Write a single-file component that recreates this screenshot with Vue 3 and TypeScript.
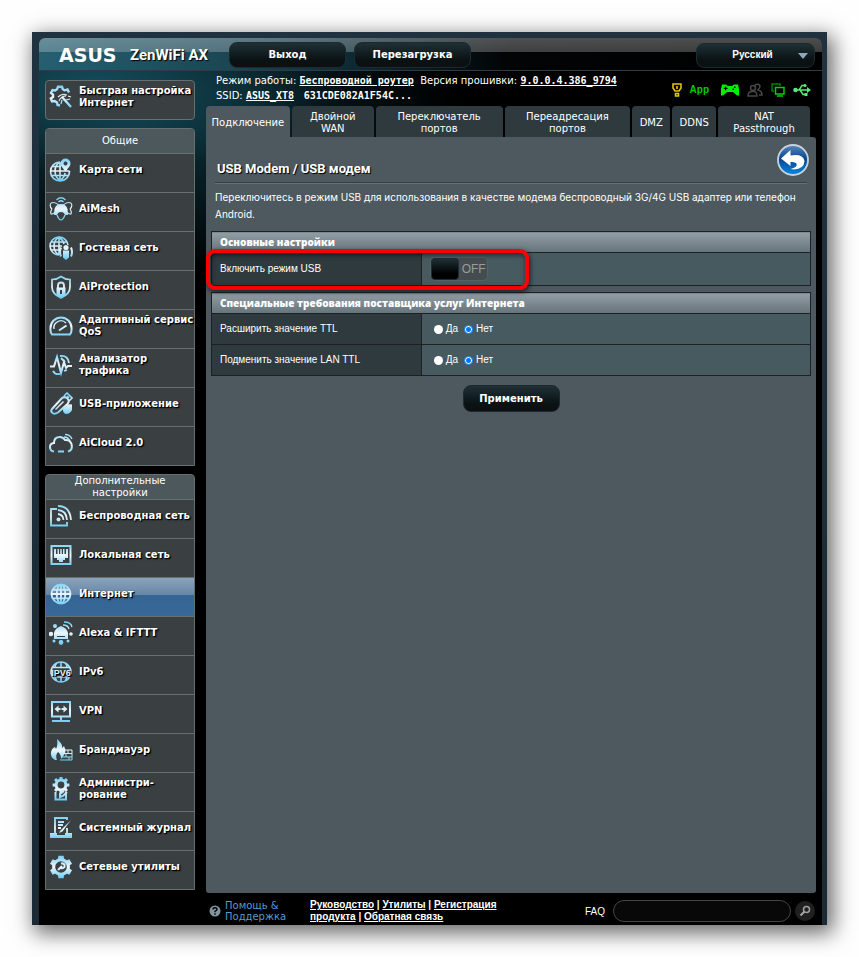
<script setup lang="ts">
import { ref } from 'vue'

interface Shape {
  d: string
  fill?: boolean
  width?: number
}
interface MenuItem {
  label: string
  icon: string
  active?: boolean
}
interface MenuGroup {
  title: string
  items: MenuItem[]
}

function circle(cx: number, cy: number, r: number): string {
  return `M${cx - r} ${cy}a${r} ${r} 0 1 0 ${2 * r} 0a${r} ${r} 0 1 0 ${-2 * r} 0Z`
}

function gear(cx: number, cy: number, outer: number, inner: number, teeth: number): string {
  const points: string[] = []
  const step = (Math.PI * 2) / teeth
  for (let i = 0; i < teeth; i++) {
    const a = i * step - Math.PI / 2
    for (const [offset, r] of [[-0.32, inner], [-0.22, outer], [0.22, outer], [0.32, inner]]) {
      const t = a + offset * step
      points.push(`${(cx + r * Math.cos(t)).toFixed(2)} ${(cy + r * Math.sin(t)).toFixed(2)}`)
    }
  }
  return `M${points.join('L')}Z`
}

function globe(cx: number, cy: number, r: number): string {
  const h = r * 0.45
  const w = r * 0.88
  return (
    circle(cx, cy, r) +
    `M${cx - r} ${cy}h${2 * r}M${cx} ${cy - r}v${2 * r}` +
    `M${cx - w} ${cy - h}h${2 * w}M${cx - w} ${cy + h}h${2 * w}` +
    `M${cx} ${cy - r}a${h} ${r} 0 0 0 0 ${2 * r}a${h} ${r} 0 0 0 0 ${-2 * r}`
  )
}

const icons: Record<string, Shape[]> = {
  wizard: [
    { d: 'M11 20.5L8.500 20L8 17.500L5.500 16L3 16.500L1.800 13.500L4 12L4 9.500L2 8L3.500 5L6 5.500L8 4.200L9 1.800L13 1.800L13.800 4.200L15.500 5.300L18.500 4.500L20 7.500', width: 2.4 },
    { d: 'M13 12L22 22', width: 2.4 },
    { d: 'M9 12q4-4 9-2M10 16q2-5 7-5M19 11l3 1M17 15l4-1M12 19l1-4', width: 1.2 },
  ],
  map: [
    {
      d: 'M11 4A9.500 9.500 0 1 0 20.500 13M1.500 13H20.500M11 4V22.500M3 8.500H12M3 17.500H19M11 4Q6 7 6 13Q6 19 11 22.500Q16 19 16 15',
      width: 1.6,
    },
    { d: 'M16.500 14C14 9.500 11.500 8.500 11.500 5.500a5 5 0 0 1 10 0C21.500 8.500 19 9.500 16.500 14ZM16.500 3.500a2 2 0 1 0 .01 0Z', fill: true },
  ],
  mesh: [
    { d: 'M5 18L5.500 12Q7 7 12 7Q17 7 18.500 12L19 18H16Q15 15 12 15Q9 15 8 18Z', fill: true },
    { d: 'M2 6Q6 4 12 10Q20 18 22 17Q23 15 21 12M22 6Q18 4 12 10Q4 18 2 17Q1 15 3 12M3 12Q0 9 2 6M21 12Q24 9 22 6M8 18Q10 23 12 23Q14 23 16 18', width: 1.2 },
    { d: 'M7.500 3Q12-1.500 16.500 3M9.500 5Q12 2.500 14.500 5', width: 1.2 },
  ],
  guest: [
    { d: 'M19 9A9 9 0 1 0 10 19M1 10H13M10 1V19M2 6H18M2 14H11M10 1Q5 4 5 10Q5 16 10 19M10 1Q14 4 15 8', width: 1.6 },
    { d: circle(17, 11.5, 2.6) + 'M14 14.500h6v7l-3 2.500l-3-2.500Z', fill: true },
    { d: 'M12 11.500q-2 4.500 0 9M22 11.500q2 4.500 0 9', width: 2 },
  ],
  shield: [
    { d: 'M12 1.500Q16 4.500 21 4.500V12Q21 19 12 23Q3 19 3 12V4.500Q8 4.500 12 1.500Z', width: 1.7 },
    { d: 'M9 13V10.500a3 3 0 0 1 6 0V13', width: 1.8 },
    { d: 'M7.500 12.500h9V20l-4.500 3l-4.500-3ZM11 15v4h2v-4Z', fill: true },
  ],
  gauge: [
    { d: 'M3 20.500Q1 18 1.500 14A10.500 10.500 0 0 1 22.500 14Q23 18 21 20.500Z', width: 2 },
    { d: 'M5 15A7 7 0 0 1 17 9', width: 1.4 },
    { d: 'M10 16.500L17.500 11.500', width: 2 },
  ],
  traffic: [
    { d: 'M1 13.500H5L8 4L12 20L15 9L17 15L19 13H23', width: 2 },
    { d: 'M11 3Q19 2 20 10M12 5L16 9M4 18Q6 22 11 21M15 18l3-1', width: 1.8 },
  ],
  usb: [
    { d: 'M3 17L13 6Q16 4 18.500 6.500Q21 9 18.500 12L9 20.500Q5 23 3 20.500Q1.500 19 3 17Z', width: 2 },
    { d: 'M15 4L18 1L23 6L20 9M18 4l2 2', width: 1.6 },
    { d: 'M6 17L14 9L15 10L7 18Z', fill: true },
    { d: 'M14 18Q14 15 17 15Q18 11.500 23 12.500V18Q21 22 17 22Q14 21 14 18Z', fill: true },
  ],
  cloud: [
    { d: 'M5 20.500Q1 20 1 16Q1 12.500 5 12Q5 6.500 10 6Q14 5.500 16 9Q21 8.500 22.500 13Q24 19 19 20.500M9 20.500h6', width: 2 },
    { d: 'M15 6Q19 6 21 10M16 3.500Q21 3.500 23 8', width: 1.3 },
  ],
  wireless: [
    { d: 'M8 5H2V21.500H18V18', width: 1.8 },
    { d: 'M9 2Q21 2 22 16M9 6Q17.500 6.500 18 16M9 10Q14 10.500 14.500 16', width: 1.8 },
    { d: circle(9.5, 15.5, 2), fill: true },
  ],
  lan: [
    { d: 'M2.500 3H21.500V21H2.500Z', width: 2 },
    { d: 'M5 6H7V11H8.500V6H10V11H11.250V6H12.750V11H14V6H15.500V11H17V6H19V15H16V17H14V19H10V17H8V15H5Z', fill: true },
  ],
  internet: [{ d: globe(12, 12, 9.5), width: 1.8 }],
  alexa: [
    { d: 'M5 18V12Q6 7 12 5Q18 7 19 12V18ZM8 16h8v-1H8Z', fill: true },
    { d: circle(2, 13, 2.2) + circle(22, 13, 1.8) + circle(6, 5, 2) + circle(12, 21.5, 2.4) + circle(5, 20, 1.5) + circle(19, 20, 1.5), fill: true },
    { d: 'M14 4Q19 4 20 8M15 1Q22 1 23 6', width: 1.3 },
  ],
  ipv6: [{ d: circle(12, 12, 10) + 'M3 7.500H21M3 17H21M12 2V7M12 17V22M8 3Q6 5 6 7M16 3Q18 5 18 7M6 17Q7 20 8 21M18 17Q17 20 16 21', width: 1.5 }],
  vpn: [
    { d: 'M3 3H21V17.500H3Z', width: 2 },
    { d: 'M12 18V21M3 22H21', width: 2 },
    { d: 'M5.500 10l4-3.500v2.500h2v2h-2v2.500ZM18.500 10l-4-3.500v2.500h-2v2h2v2.500Z', fill: true },
  ],
  firewall: [
    { d: 'M6 22Q1 19 2 14Q3 10 6 9L7 11Q9 7 8 1Q14 6 13 10L15 8Q18 14 15 17L12 21Q12 16 9 14Q6 17 8 22Z', fill: true },
    { d: 'M14 12H23V22H11M15 15.500H23M13 19H23M19 12V15.500M17 15.500V19M20 19V22', width: 1 },
  ],
  admin: [
    { d: gear(12, 8, 8.5, 6.4, 8) + circle(12, 8, 3.4), fill: true },
    { d: 'M6.500 15V22.500H17V15M15 14L11 17V20L14 19L18 15', width: 2 },
  ],
  log: [
    { d: 'M5 2H18V4M6 2V18M18 12V18M9 6H15M9 9H14M9 12H12', width: 1.8 },
    { d: 'M22 4L11 15L10 17L13.500 15.500Z', fill: true },
    { d: 'M1 17H8V19H16V17H23V22H1Z', fill: true },
  ],
  tools: [
    { d: gear(12, 12, 11.5, 9, 6) + circle(12, 12, 5.8), fill: true },
    { d: 'M9 15L13 11M12 8.500Q14 8 15.500 9.500V12Q14 14 12 13', width: 2 },
  ],
}

const groups: MenuGroup[] = [
  {
    title: 'Общие',
    items: [
      { label: 'Карта сети', icon: 'map' },
      { label: 'AiMesh', icon: 'mesh' },
      { label: 'Гостевая сеть', icon: 'guest' },
      { label: 'AiProtection', icon: 'shield' },
      { label: 'Адаптивный сервис QoS', icon: 'gauge' },
      { label: 'Анализатор трафика', icon: 'traffic' },
      { label: 'USB-приложение', icon: 'usb' },
      { label: 'AiCloud 2.0', icon: 'cloud' },
    ],
  },
  {
    title: 'Дополнительные настройки',
    items: [
      { label: 'Беспроводная сеть', icon: 'wireless' },
      { label: 'Локальная сеть', icon: 'lan' },
      { label: 'Интернет', icon: 'internet', active: true },
      { label: 'Alexa & IFTTT', icon: 'alexa' },
      { label: 'IPv6', icon: 'ipv6' },
      { label: 'VPN', icon: 'vpn' },
      { label: 'Брандмауэр', icon: 'firewall' },
      { label: 'Администри-рование', icon: 'admin' },
      { label: 'Системный журнал', icon: 'log' },
      { label: 'Сетевые утилиты', icon: 'tools' },
    ],
  },
]

const tabs: string[] = [
  'Подключение',
  'Двойной WAN',
  'Переключатель портов',
  'Переадресация портов',
  'DMZ',
  'DDNS',
  'NAT Passthrough',
]

const usbMode = ref(false)
const ttl = ref([
  { id: 'extend', label: 'Расширить значение TTL', value: 'no' },
  { id: 'spoof', label: 'Подменить значение LAN TTL', value: 'no' },
])
const query = ref('')
</script>

<template>
  <div class="page">
    <svg class="defs" width="0" height="0" aria-hidden="true">
      <defs>
        <linearGradient id="ice" gradientUnits="userSpaceOnUse" x1="0" y1="0" x2="0" y2="24">
          <stop offset="0" stop-color="#6fcdf4" />
          <stop offset=".5" stop-color="#eef6fb" />
          <stop offset="1" stop-color="#5cc8f6" />
        </linearGradient>
      </defs>
    </svg>
    <div class="frame">
      <div class="shell">
        <header class="top">
          <span class="logo">ASUS</span>
          <span class="model">ZenWiFi AX</span>
          <button class="dark top-button" type="button">Выход</button>
          <button class="dark top-button" type="button">Перезагрузка</button>
          <div class="language dark">
            <select aria-label="Русский">
              <option>Русский</option>
            </select>
            <svg width="10" height="6" viewBox="0 0 10 6"><path d="M0 0H10L5 6Z" fill="#8da9b8" /></svg>
          </div>
        </header>

        <div class="body">
          <nav class="side">
            <a class="quick" href="#">
              <svg class="icon" viewBox="0 0 24 24">
                <path v-for="(s, i) in icons.wizard" :key="i" class="line" :d="s.d" :stroke-width="s.width" />
              </svg>
              <span>Быстрая настройка Интернет</span>
            </a>
            <section v-for="group in groups" :key="group.title" class="group">
              <h2><span>{{ group.title }}</span></h2>
              <a v-for="item in group.items" :key="item.label" href="#" class="item" :class="{ active: item.active }">
                <svg class="icon" viewBox="0 0 24 24">
                  <path
                    v-for="(s, i) in icons[item.icon]"
                    :key="i"
                    :class="s.fill ? 'solid' : 'line'"
                    :d="s.d"
                    :stroke-width="s.width"
                  />
                  <text v-if="item.icon === 'ipv6'" x="12" y="16" text-anchor="middle" class="badge">IPV6</text>
                </svg>
                <span>{{ item.label }}</span>
              </a>
            </section>
          </nav>

          <main class="main">
            <div class="info">
              <div class="info-text">
                <p>Режим работы: <a href="#">Беспроводной роутер</a>&nbsp; Версия прошивки: <a href="#">9.0.0.4.386_9794</a></p>
                <p>SSID: <a href="#">ASUS_XT8</a> &nbsp; <b>631CDE082A1F54C...</b></p>
              </div>
              <div class="status">
                <svg width="10" height="14" viewBox="0 0 10 14" fill="none" stroke="#e3c400" stroke-width="1.6">
                  <path d="M1 1H9V5L7 8H3L1 5ZM3.500 10.500H6.500V13H3.500ZM5 3V6" />
                </svg>
                <span class="app">App</span>
                <svg width="18" height="14" viewBox="0 0 18 14">
                  <path d="M1 1.500H5L7 3H11L13 1.500H17L18 6V12.500H16L12 9H6L2 12.500H0V6ZM4 3.500V4.800H2.800V6H4V7.200H5.200V6H6.500V4.800H5.200V3.500ZM13 3.500V5H14.500V3.500ZM11.500 5.500V7H13V5.500Z" fill="#00f000" fill-rule="evenodd" />
                </svg>
                <svg width="16" height="14" viewBox="0 0 16 14" fill="none" stroke="#474747" stroke-width="1.5">
                  <circle cx="6" cy="5" r="2.500" /><path d="M1 13Q1 8 6 8.500Q10 8 10 13ZM8 2Q12 0 13 3Q13 5 11 7Q15 8 15 12H12" />
                </svg>
                <svg width="14" height="14" viewBox="0 0 14 14" fill="none" stroke="#00d000" stroke-width="1.5">
                  <path d="M3 8H1V1H9V3" stroke="#008000" /><path d="M4.500 4.500H13V11H4.500ZM6 13H12" />
                </svg>
                <svg width="18" height="14" viewBox="0 0 18 14" fill="#58e878">
                  <path d="M3 7H15M6 7L9 2.500H12M7 7L10 11.500H13" fill="none" stroke="#58e878" stroke-width="1.500" />
                  <circle cx="2.500" cy="7" r="2.300" /><path d="M14 4L18 7L14 10Z" /><circle cx="12" cy="2.500" r="1.600" /><path d="M11.500 10H14.500V13H11.500Z" />
                </svg>
              </div>
            </div>

            <nav class="tabs">
              <a v-for="(tab, i) in tabs" :key="tab" href="#" :class="{ current: i === 0 }"><span>{{ tab }}</span></a>
            </nav>

            <div class="panel">
              <div class="title">
                <h1>USB Modem / USB модем</h1>
                <button class="back" type="button" aria-label="Назад">
                  <svg width="34" height="34" viewBox="0 0 34 34">
                    <defs>
                      <linearGradient id="blue" x1="0" y1="0" x2="0" y2="1">
                        <stop offset="0" stop-color="#5c88bd" /><stop offset=".45" stop-color="#07468f" /><stop offset="1" stop-color="#0787e5" />
                      </linearGradient>
                    </defs>
                    <circle cx="17" cy="17" r="15" fill="url(#blue)" stroke="#c8d2dc" stroke-width="1.800" />
                    <path d="M5 15.500L14.500 7V12.500Q27 10.500 28.500 18Q28 26 18 26.500L14.500 26Q22 24 20.500 20.500Q19 18.500 14.500 19V23Z" fill="#fff" />
                  </svg>
                </button>
              </div>
              <p class="lead">Переключитесь в режим USB для использования в качестве модема беспроводный 3G/4G USB адаптер или телефон Android.</p>

              <div class="marked">
                <table>
                  <thead><tr><th colspan="2">Основные настройки</th></tr></thead>
                  <tbody>
                    <tr class="tall">
                      <th scope="row"><label for="usb-mode">Включить режим USB</label></th>
                      <td>
                        <label class="toggle">
                          <input id="usb-mode" v-model="usbMode" type="checkbox" />
                          <span>{{ usbMode ? 'ON' : 'OFF' }}</span>
                        </label>
                      </td>
                    </tr>
                  </tbody>
                </table>
                <div class="mark"></div>
              </div>

              <table>
                <thead><tr><th colspan="2">Специальные требования поставщика услуг Интернета</th></tr></thead>
                <tbody>
                  <tr v-for="row in ttl" :key="row.id">
                    <th scope="row">{{ row.label }}</th>
                    <td>
                      <div class="radios">
                        <label><input v-model="row.value" type="radio" :name="row.id" value="yes" />Да</label>
                        <label><input v-model="row.value" type="radio" :name="row.id" value="no" />Нет</label>
                      </div>
                    </td>
                  </tr>
                </tbody>
              </table>
              <button class="dark apply" type="button">Применить</button>
            </div>
          </main>
        </div>

        <footer class="foot">
          <svg width="12" height="12" viewBox="0 0 12 12">
            <circle cx="6" cy="6" r="5.500" fill="#8296a0" />
            <path d="M4 4.500Q4 2.800 6 2.800Q8 2.800 8 4.500Q8 5.500 6 6.300V7.300M6 8.300V9.800" fill="none" stroke="#000" stroke-width="1.400" />
          </svg>
          <a class="help" href="#">Помощь &amp; Поддержка</a>
          <p class="links">
            <a href="#">Руководство</a> | <a href="#">Утилиты</a> | <a href="#"><span>Регистрация</span> <span>продукта</span></a> | <a href="#">Обратная связь</a>
          </p>
          <label class="faq" for="faq">FAQ</label>
          <input id="faq" v-model="query" class="search" type="text" />
          <button class="find" type="button" aria-label="Поиск">
            <svg width="12" height="12" viewBox="0 0 12 12" fill="none" stroke="#a0a0a0">
              <circle cx="7.500" cy="4.500" r="3" stroke-width="1.500" /><path d="M5.500 6.500L1.500 10.500" stroke-width="2.200" />
            </svg>
          </button>
        </footer>
      </div>
    </div>
  </div>
</template>

<style>
body {
  margin: 0;
  background: #fefefe;
}
</style>

<style scoped>
.page {
  box-sizing: border-box;
  padding: 32px;
  font-family: "DejaVu Sans", Verdana, sans-serif;
  font-size: 10px;
  line-height: 12px;
  color: #fff;
}
.page *,
.page *::before,
.page *::after {
  box-sizing: border-box;
}
.defs {
  position: absolute;
}
a {
  color: inherit;
  text-decoration: none;
}
p,
h1,
h2 {
  margin: 0;
}
button,
input,
select {
  font: inherit;
  color: inherit;
}
.frame {
  padding: 6px 5px 0 7px;
  background: linear-gradient(#203140, #1d2d38 60%, #1b2a34);
  box-shadow: 4px 6px 20px 2px rgba(0, 0, 0, 0.6);
}
.shell {
  border-radius: 6px 6px 0 0;
  background:
    radial-gradient(ellipse 250px 90px at 55px 45px, rgba(22, 82, 98, 0.85), transparent),
    radial-gradient(ellipse 330px 150px at 100px 90px, rgba(13, 52, 62, 0.9), transparent),
    #000;
}
.top {
  display: flex;
  align-items: center;
  height: 33px;
  padding: 2px 7px 0 20px;
  border-bottom: 1px solid #2e3d44;
  border-radius: 6px 6px 0 0;
  background:
    linear-gradient(rgba(255, 255, 255, 0.3), rgba(255, 255, 255, 0.24)) top / 100% 14px no-repeat,
    linear-gradient(90deg, #265f70, #1c4654 24%, #0e2d38 38%, #020405 60%, #000);
}
.logo {
  width: 71px;
  font-size: 19px;
  line-height: 20px;
  font-weight: 700;
}
.model {
  width: 99px;
  font: 700 15px/20px Roboto, sans-serif;
  text-shadow: 1px 1px 1px #000;
  white-space: nowrap;
}
.dark {
  border: 1px solid #1a2a2f;
  border-radius: 8px;
  background: linear-gradient(#1f3035, #0a1214 70%, #0e0f10);
  font-weight: 700;
  text-align: center;
}
.top-button {
  width: 117px;
  height: 26px;
  margin-right: 8px;
  padding: 0;
}
.language {
  position: relative;
  width: 119px;
  height: 25px;
  margin-left: auto;
}
.language select {
  width: 100%;
  height: 100%;
  padding: 0 14px 0 8px;
  border: 0;
  background: transparent;
  appearance: none;
  font: 700 10px/12px "Liberation Sans", Arial, sans-serif;
  text-align: center;
  text-align-last: center;
}
.language option {
  color: #fff;
  background: #0a1214;
}
.language svg {
  position: absolute;
  top: 9px;
  right: 6px;
  pointer-events: none;
}
.body {
  display: flex;
  gap: 11px;
  padding: 0 6px;
}
.side {
  flex: 0 0 150px;
  display: flex;
  flex-direction: column;
  gap: 8px;
  padding-top: 9px;
  font-weight: 700;
}
.quick,
.item {
  display: flex;
  align-items: center;
  gap: 6px;
  padding: 0 0 7px 3px;
  text-shadow: 1px 1px 0 #000, 1px 1px 2px #000;
}
.quick {
  height: 40px;
  border: 1px solid #66706f;
  border-radius: 4px;
  background: #3a3f41;
}
.group {
  border: 1px solid #66706f;
  border-radius: 4px 4px 0 0;
  background: #3a3f41;
}
.group h2 {
  display: flex;
  align-items: center;
  justify-content: center;
  height: 24px;
  padding: 0 20px;
  background: #4d585d;
  border-radius: 3px 3px 0 0;
  font-size: 10px;
  line-height: 12px;
  font-weight: 400;
  text-align: center;
}
.item {
  height: 39px;
  border-top: 1px solid #66706f;
}
.item.active {
  background: linear-gradient(#8aa3bb, #6685a6 46%, #366593 46%, #366899);
}
.icon {
  flex: 0 0 24px;
  height: 24px;
}
.line {
  fill: none;
  stroke: url(#ice);
}
.solid {
  fill: url(#ice);
  fill-rule: evenodd;
}
.badge {
  font: 700 9px "Liberation Sans", Arial, sans-serif;
  fill: #e4f2fa;
}
.main {
  flex: 1;
  min-width: 0;
  display: flex;
  flex-direction: column;
}
.info {
  display: flex;
  justify-content: space-between;
  height: 35px;
  padding: 2px 5px 0 10px;
}
.info-text {
  line-height: 15px;
  white-space: nowrap;
}
.info a,
.info b {
  font-family: "DejaVu Sans Mono", monospace;
  font-weight: 700;
}
.info a {
  text-decoration: underline;
}
.status {
  display: flex;
  align-items: center;
  gap: 8px;
}
.status .app {
  padding-right: 4px;
  font: 700 10px/14px "Liberation Sans", Arial, sans-serif;
  color: #00cc00;
}
.tabs {
  display: grid;
  grid-template-columns:
    minmax(0, 84fr) minmax(0, 82fr) minmax(0, 127fr) minmax(0, 126fr)
    minmax(0, 38fr) minmax(0, 44fr) minmax(0, 92fr);
  gap: 2px;
  height: 31px;
  margin-right: 6px;
}
.tabs a {
  display: flex;
  align-items: center;
  justify-content: center;
  padding: 3px 5px 0;
  border-radius: 4px 4px 0 0;
  background: #2f3a3e;
  text-align: center;
}
.tabs a.current {
  background: #4d595e;
}
.tabs a span {
  min-width: min-content;
}
.tabs a:nth-child(2) {
  padding: 3px 16px 0;
}
.panel {
  flex: 1;
  min-height: 756px;
  padding: 6px 5px;
  border-radius: 0 3px 3px 3px;
  background: #4d595e;
  font-family: "Liberation Sans", Arial, sans-serif;
}
.title {
  display: flex;
  justify-content: space-between;
  height: 41px;
  margin: 0 4px;
  border-bottom: 1px solid #667177;
  box-shadow: inset 0 -1px 0 #343f44;
}
.title h1 {
  padding: 17px 0 0 2px;
  font: 700 13px/18px Roboto, "Liberation Sans", sans-serif;
  text-shadow: 1px 1px 1px #000;
}
.back {
  width: 34px;
  height: 34px;
  margin-right: -3px;
  padding: 0;
  border: 0;
  background: none;
}
.lead {
  margin: 5px 4px 8px;
  font-family: Inter, "Liberation Sans", sans-serif;
  line-height: 17px;
}
table {
  width: 100%;
  border-collapse: collapse;
  line-height: 12px;
}
table th,
table td {
  padding: 0 8px;
  border: 1px solid #1d2123;
  text-align: left;
}
thead th {
  height: 21px;
  background: linear-gradient(#929ea5, #65737b);
  font: 800 10px/12px "Open Sans", Verdana, sans-serif;
}
tbody th {
  width: 35%;
  height: 31px;
  background: #2f3a3e;
  font-weight: 400;
}
tbody td {
  background: #475a5f;
}
tbody .tall th {
  height: 33px;
}
.marked {
  position: relative;
  margin-bottom: 6px;
}
.mark {
  position: absolute;
  top: 18px;
  left: -5px;
  width: 323px;
  height: 41px;
  border: 4px solid #fb0000;
  border-radius: 9px;
  box-shadow: 1px 2px 5px rgba(0, 0, 0, 0.7), inset 1px 2px 5px rgba(0, 0, 0, 0.6);
  pointer-events: none;
}
.toggle {
  display: flex;
  align-items: center;
  width: 58px;
  height: 24px;
  border: 1px solid #556164;
  border-radius: 5px;
  background: #444c4f;
  color: #989c9e;
  font-size: 12px;
}
.toggle input {
  flex: 0 0 28px;
  height: 22px;
  margin: 0 3px 0 0;
  border: 1px solid #1d2c2d;
  border-radius: 4px;
  background: linear-gradient(#1e3035, #000 75%);
  appearance: none;
}
.radios {
  display: flex;
  gap: 6px;
  padding-left: 4px;
}
.radios label {
  display: flex;
  align-items: center;
  gap: 3px;
}
.radios input {
  width: 9px;
  height: 9px;
  margin: 0;
  border-radius: 50%;
  background: #fff;
  appearance: none;
}
.radios input:checked {
  border: 1px solid #0075ff;
  background: radial-gradient(circle, #0075ff 2px, #fff 3px);
}
.apply {
  display: block;
  width: 97px;
  height: 27px;
  margin: 9px auto 0;
  padding: 0;
  font-family: "DejaVu Sans", Verdana, sans-serif;
}
.foot {
  display: flex;
  align-items: center;
  height: 32px;
  padding: 4px 7px 0 170px;
  line-height: 11px;
}
.help {
  width: 64px;
  margin: 0 21px 0 4px;
  color: #569ad0;
}
.links {
  width: 205px;
  font-family: "Liberation Sans", Arial, sans-serif;
  font-weight: 700;
  line-height: 12px;
}
.links a {
  text-decoration: underline;
}
.faq {
  margin-left: auto;
  font-family: "Liberation Sans", Arial, sans-serif;
}
.search {
  width: 178px;
  height: 22px;
  margin: 0 4px 0 8px;
  padding: 0 10px;
  border: 1px solid #454545;
  border-radius: 11px;
  background: #080808;
}
.find {
  display: flex;
  align-items: center;
  justify-content: center;
  width: 20px;
  height: 20px;
  padding: 0;
  border: 0;
  border-radius: 50%;
  background: #202020;
}
</style>
